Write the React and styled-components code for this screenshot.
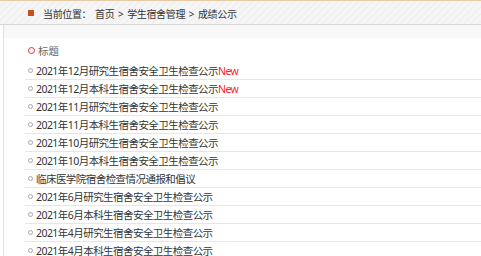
import styled, { createGlobalStyle } from 'styled-components';

const GlobalStyle = createGlobalStyle`
  html, body {
    margin: 0;
    padding: 0;
    background: #ffffff;
  }
  body {
    font-family: "Noto Sans", "Noto Sans CJK SC", sans-serif;
    font-size: 10.5px;
    color: #333333;
  }
`;

const items = [
  { title: '2021年12月研究生宿舍安全卫生检查公示', isNew: true },
  { title: '2021年12月本科生宿舍安全卫生检查公示', isNew: true },
  { title: '2021年11月研究生宿舍安全卫生检查公示' },
  { title: '2021年11月本科生宿舍安全卫生检查公示' },
  { title: '2021年10月研究生宿舍安全卫生检查公示' },
  { title: '2021年10月本科生宿舍安全卫生检查公示' },
  { title: '临床医学院宿舍检查情况通报和倡议' },
  { title: '2021年6月研究生宿舍安全卫生检查公示' },
  { title: '2021年6月本科生宿舍安全卫生检查公示' },
  { title: '2021年4月研究生宿舍安全卫生检查公示' },
  { title: '2021年4月本科生宿舍安全卫生检查公示' },
];

const Page = styled.div`
  border-top: 1px solid #e6cba4;
  height: 255px;
  overflow: hidden;
`;

const Breadcrumb = styled.div`
  display: flex;
  align-items: center;
  gap: 9px;
  height: 23px;
  padding-left: 28px;
  border-bottom: 1px solid #d6d6d6;
  background: repeating-linear-gradient(
    135deg,
    #f6f6f6 0px,
    #f6f6f6 3px,
    #f1f1f1 3px,
    #f1f1f1 5px
  );
`;

const Square = styled.span`
  width: 6px;
  height: 6px;
  margin-top: 1px;
  background: #c8501f;
`;

const Crumbs = styled.span`
  padding-top: 1px;
  font-size: 10px;
  letter-spacing: -0.35px;
  word-spacing: 1.5px;
  white-space: pre;
  color: #333333;
`;

const Body = styled.div`
  margin-left: 3px;
  border-left: 1px solid #e2e2e2;
  height: 100%;
`;

const Band = styled.div`
  height: 13px;
  background: #f8f8f8;
`;

const List = styled.div`
  padding-left: 21px;
`;

const Heading = styled.div`
  display: flex;
  align-items: center;
  gap: 3px;
  height: 24px;
  padding-left: 3px;
  color: #666666;
`;

const Ring = styled.span`
  box-sizing: border-box;
  width: ${({ $size }) => $size}px;
  height: ${({ $size }) => $size}px;
  border-radius: 50%;
  border: ${({ $red }) => ($red ? '1.2px solid #e8323c' : '1px solid #a8a8a8')};
  flex-shrink: 0;
`;

const Row = styled.div`
  display: flex;
  align-items: center;
  gap: 3px;
  height: 17px;
  padding-left: 3px;
  border-bottom: 1px solid #e7e7e2;
  white-space: nowrap;
  letter-spacing: -0.55px;
`;

const New = styled.span`
  color: #ff1a1a;
`;

export default function App() {
  return (
    <>
      <GlobalStyle />
      <Page>
        <Breadcrumb>
          <Square />
          <Crumbs>当前位置： 首页 &gt; 学生宿舍管理 &gt; 成绩公示</Crumbs>
        </Breadcrumb>
        <Body>
          <Band />
          <List>
            <Heading>
              <Ring $size={7} $red />
              标题
            </Heading>
            {items.map((item) => (
              <Row key={item.title}>
                <Ring $size={5} />
                <span>
                  {item.title}
                  {item.isNew && <New>New</New>}
                </span>
              </Row>
            ))}
          </List>
        </Body>
      </Page>
    </>
  );
}
